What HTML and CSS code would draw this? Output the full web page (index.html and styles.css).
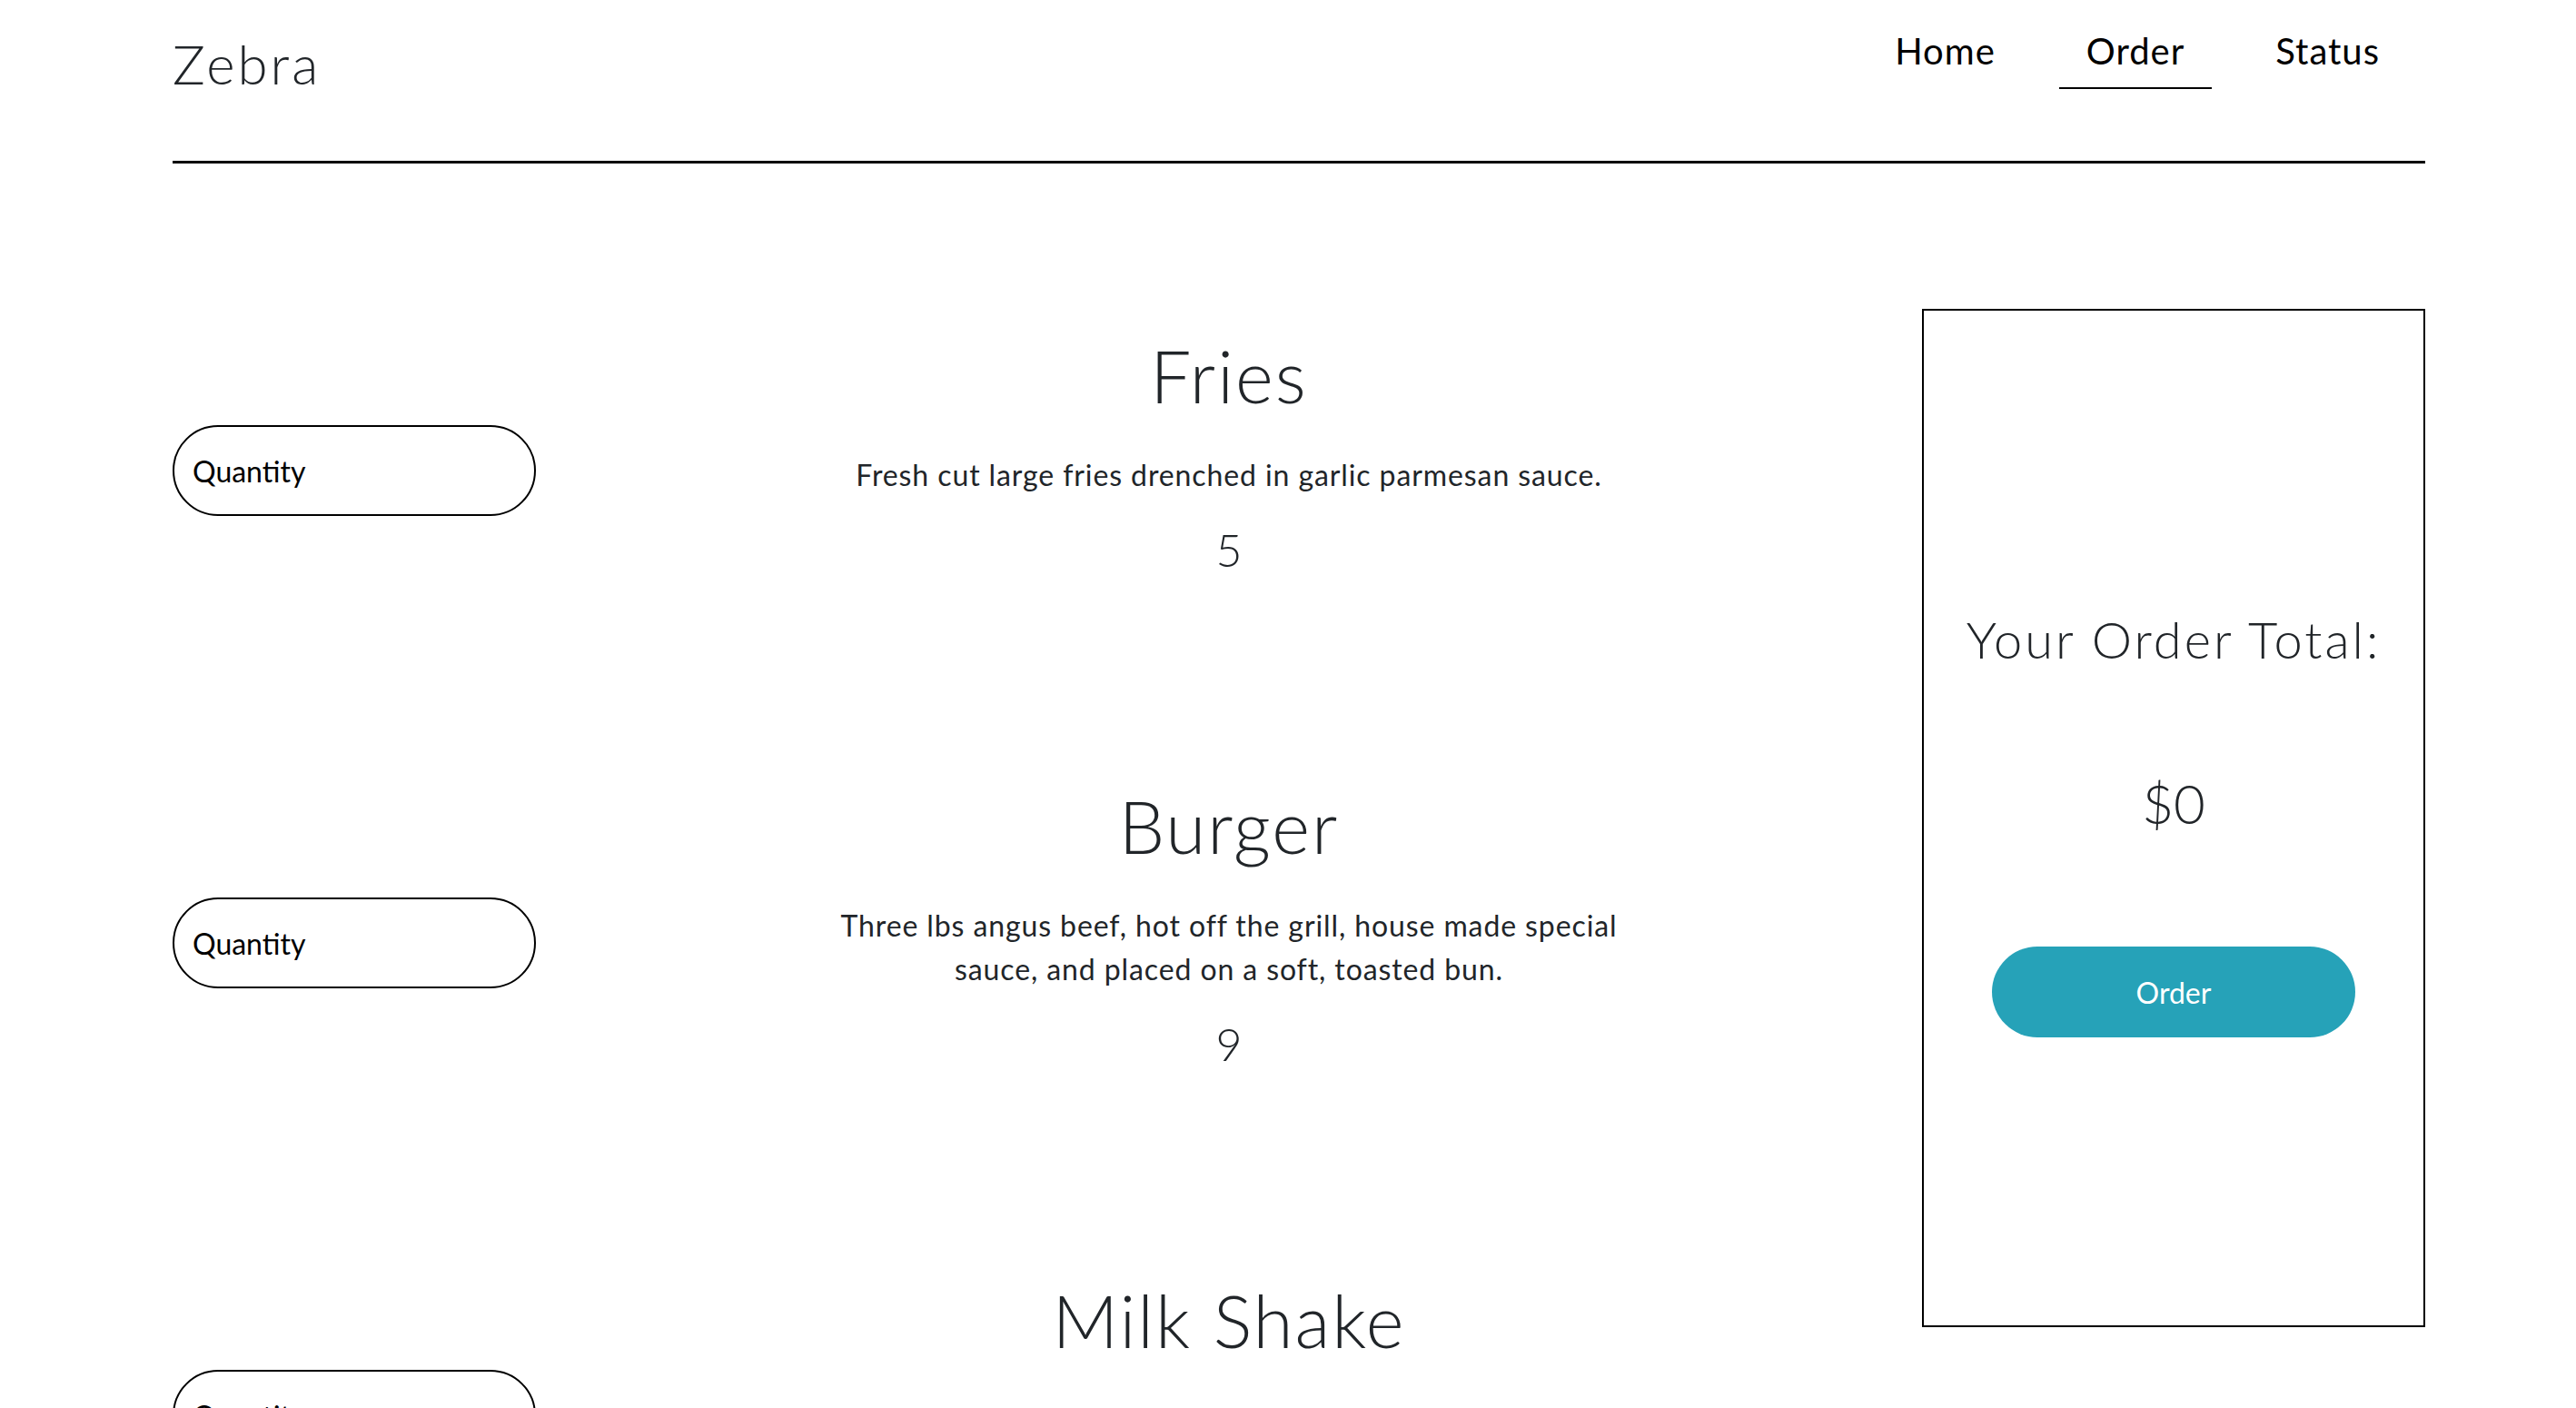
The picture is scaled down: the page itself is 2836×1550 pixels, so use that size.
FILE: index.html
```html
<!DOCTYPE html>
<html lang="en">
<head>
<meta charset="utf-8">
<title>Zebra - Order</title>
<link rel="stylesheet" href="styles.css">
</head>
<body>
<div class="page">
  <header class="site-header">
    <a class="brand" href="#">Zebra</a>
    <nav class="nav">
      <a class="nav-link" href="#">Home</a>
      <a class="nav-link active" href="#">Order</a>
      <a class="nav-link" href="#">Status</a>
    </nav>
  </header>
  <main class="order-layout">
    <section class="menu-list">
      <div class="menu-row">
        <div class="qty-col"><input class="qty-input" type="number" placeholder="Quantity"></div>
        <div class="item">
          <h2 class="item-name">Fries</h2>
          <p class="item-desc">Fresh cut large fries drenched in garlic parmesan sauce.</p>
          <p class="item-price">5</p>
        </div>
      </div>
      <div class="menu-row">
        <div class="qty-col"><input class="qty-input" type="number" placeholder="Quantity"></div>
        <div class="item">
          <h2 class="item-name">Burger</h2>
          <p class="item-desc">Three lbs angus beef, hot off the grill, house made special sauce, and placed on a soft, toasted bun.</p>
          <p class="item-price">9</p>
        </div>
      </div>
      <div class="menu-row">
        <div class="qty-col"><input class="qty-input" type="number" placeholder="Quantity"></div>
        <div class="item">
          <h2 class="item-name">Milk Shake</h2>
          <p class="item-desc">Thick and creamy hand-spun vanilla shake.</p>
          <p class="item-price">4</p>
        </div>
      </div>
    </section>
    <aside class="total-panel">
      <h3 class="total-title">Your Order Total:</h3>
      <p class="total-amount">$0</p>
      <button class="order-btn" type="button">Order</button>
    </aside>
  </main>
</div>
</body>
</html>
```
FILE: styles.css
```css
* { box-sizing: border-box; }
html, body { margin: 0; padding: 0; background: #fff; }
body { font-family: Lato, "Noto Sans", sans-serif; color: #212529; }

.page { width: 2480px; margin-left: 190px; }

.site-header {
  display: flex;
  justify-content: space-between;
  align-items: flex-start;
  height: 180px;
  border-bottom: 3px solid #000;
}
.brand {
  margin-top: 34px;
  font-size: 60px;
  line-height: 72px;
  font-weight: 300;
  letter-spacing: 3px;
  color: #212529;
  text-decoration: none;
}
.nav { display: flex; margin-top: 26px; }
.nav-link {
  margin: 0 20px;
  padding: 0 30px 10px;
  font-size: 40px;
  line-height: 60px;
  letter-spacing: 1px;
  color: #000;
  text-decoration: none;
  border-bottom: 2px solid transparent;
}
.nav-link.active { border-bottom-color: #000; }

.order-layout { display: flex; align-items: flex-start; padding-top: 90px; }
.menu-list { flex: 1; }
.menu-row { display: flex; align-items: center; }
.qty-col { width: 400px; flex: none; }
.qty-input {
  display: block;
  width: 400px;
  height: 100px;
  border: 2px solid #000;
  border-radius: 50px;
  padding: 0 20px;
  font-family: inherit;
  font-size: 32px;
  color: #000;
  background: #fff;
  outline: none;
}
.qty-input::placeholder { color: #000; opacity: 1; }

.item { flex: 1; text-align: center; padding: 95px 0 131px; }
.item-name {
  margin: 0 0 38px;
  font-size: 80px;
  line-height: 96px;
  font-weight: 300;
  letter-spacing: 2px;
}
.item-desc {
  margin: 0 auto 28px;
  max-width: 900px;
  font-size: 32px;
  line-height: 48px;
  letter-spacing: 0.9px;
}
.item-price { margin: 0; font-size: 50px; line-height: 60px; font-weight: 300; }

.total-panel {
  width: 554px;
  flex: none;
  height: 1121px;
  margin-top: 70px;
  border: 2px solid #000;
  display: flex;
  flex-direction: column;
  align-items: center;
  padding-top: 328px;
}
.total-title {
  margin: 0 0 111px;
  font-size: 56px;
  line-height: 67px;
  font-weight: 300;
  letter-spacing: 3px;
}
.total-amount { margin: 0 0 122px; font-size: 60px; line-height: 72px; font-weight: 300; }
.order-btn {
  width: 400px;
  height: 100px;
  border: none;
  border-radius: 50px;
  background: #26a2b8;
  color: #fff;
  font-family: inherit;
  font-size: 32px;
  cursor: pointer;
}
```
